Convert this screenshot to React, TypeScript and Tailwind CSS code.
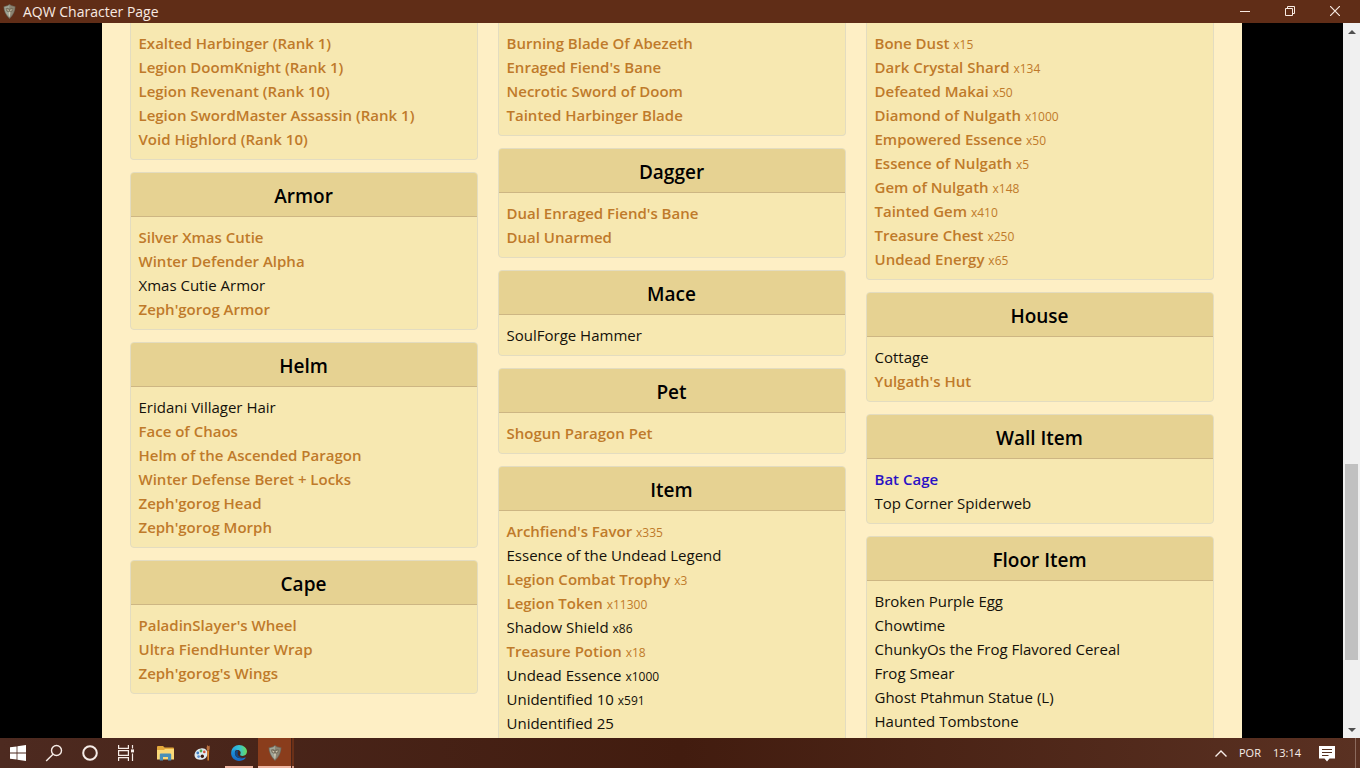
import React from 'react';

type Kind = 'ac' | 'legend' | 'normal';

interface Item {
  name: string;
  kind?: Kind;
  qty?: number;
}

interface Section {
  title?: string;
  items: Item[];
}

const KIND_CLASSES: Record<Kind, string> = {
  ac: 'font-semibold text-[#bf7a2a]',
  legend: 'font-semibold text-[#2a12c4]',
  normal: 'text-[#14110a]',
};

const ac = (name: string, qty?: number): Item => ({ name, qty, kind: 'ac' });
const normal = (name: string, qty?: number): Item => ({ name, qty, kind: 'normal' });

const columns: Section[][] = [
  [
    {
      items: [
        ac('Exalted Harbinger (Rank 1)'),
        ac('Legion DoomKnight (Rank 1)'),
        ac('Legion Revenant (Rank 10)'),
        ac('Legion SwordMaster Assassin (Rank 1)'),
        ac('Void Highlord (Rank 10)'),
      ],
    },
    {
      title: 'Armor',
      items: [
        ac('Silver Xmas Cutie'),
        ac('Winter Defender Alpha'),
        normal('Xmas Cutie Armor'),
        ac("Zeph'gorog Armor"),
      ],
    },
    {
      title: 'Helm',
      items: [
        normal('Eridani Villager Hair'),
        ac('Face of Chaos'),
        ac('Helm of the Ascended Paragon'),
        ac('Winter Defense Beret + Locks'),
        ac("Zeph'gorog Head"),
        ac("Zeph'gorog Morph"),
      ],
    },
    {
      title: 'Cape',
      items: [ac("PaladinSlayer's Wheel"), ac('Ultra FiendHunter Wrap'), ac("Zeph'gorog's Wings")],
    },
  ],
  [
    {
      items: [
        ac('Burning Blade Of Abezeth'),
        ac("Enraged Fiend's Bane"),
        ac('Necrotic Sword of Doom'),
        ac('Tainted Harbinger Blade'),
      ],
    },
    { title: 'Dagger', items: [ac("Dual Enraged Fiend's Bane"), ac('Dual Unarmed')] },
    { title: 'Mace', items: [normal('SoulForge Hammer')] },
    { title: 'Pet', items: [ac('Shogun Paragon Pet')] },
    {
      title: 'Item',
      items: [
        ac("Archfiend's Favor", 335),
        normal('Essence of the Undead Legend'),
        ac('Legion Combat Trophy', 3),
        ac('Legion Token', 11300),
        normal('Shadow Shield', 86),
        ac('Treasure Potion', 18),
        normal('Undead Essence', 1000),
        normal('Unidentified 10', 591),
        normal('Unidentified 25'),
      ],
    },
  ],
  [
    {
      items: [
        ac('Bone Dust', 15),
        ac('Dark Crystal Shard', 134),
        ac('Defeated Makai', 50),
        ac('Diamond of Nulgath', 1000),
        ac('Empowered Essence', 50),
        ac('Essence of Nulgath', 5),
        ac('Gem of Nulgath', 148),
        ac('Tainted Gem', 410),
        ac('Treasure Chest', 250),
        ac('Undead Energy', 65),
      ],
    },
    { title: 'House', items: [normal('Cottage'), ac("Yulgath's Hut")] },
    {
      title: 'Wall Item',
      items: [{ name: 'Bat Cage', kind: 'legend' }, normal('Top Corner Spiderweb')],
    },
    {
      title: 'Floor Item',
      items: [
        normal('Broken Purple Egg'),
        normal('Chowtime'),
        normal('ChunkyOs the Frog Flavored Cereal'),
        normal('Frog Smear'),
        normal('Ghost Ptahmun Statue (L)'),
        normal('Haunted Tombstone'),
      ],
    },
  ],
];

const ShieldIcon = ({ className }: { className?: string }) => (
  <svg viewBox="0 0 14 16" className={className} aria-hidden="true">
    <path d="M7 0 9 1.4 13.4 2.6Q13.4 10 7 16 .6 10 .6 2.6L5 1.4Z" fill="#6f675a" />
    <path d="M7 .8 8.8 2.2 12.6 3.2Q12.4 9.6 7 15Z" fill="#8d8573" />
    <path d="M7 .8 5.2 2.2 1.4 3.2Q1.6 9.6 7 15Z" fill="#9fa597" />
    <path d="M2.6 4.8 5 4 7 5 9 4 11.4 4.8 10.2 7.600 7 9.600 3.800 7.600Z" fill="#77705f" />
    <path d="M3.600 5.600 6.400 6.200 5.800 7.800ZM10.400 5.600 7.600 6.200 8.200 7.800Z" fill="#d0c8ae" />
    <path d="M6 8.400H8L7.400 13.600H6.600Z" fill="#cfc8b2" />
  </svg>
);

const WindowsIcon = () => (
  <svg viewBox="0 0 16 16" className="size-4" fill="#fff" aria-hidden="true">
    <path d="M0 2.3 6.6 1.4V7.6H0ZM7.4 1.3 16 0V7.6H7.4ZM0 8.4H6.6V14.6L0 13.7ZM7.4 8.4H16V16L7.4 14.7Z" />
  </svg>
);

const SearchIcon = () => (
  <svg viewBox="0 0 18 18" className="size-[18px]" fill="none" stroke="#f6ece7" strokeWidth="1.4" aria-hidden="true">
    <circle cx="11.5" cy="6.5" r="5" />
    <path d="M8 10.2 1.2 17" />
  </svg>
);

const CortanaIcon = () => (
  <svg viewBox="0 0 16 16" className="size-4" fill="none" stroke="#f6ece7" strokeWidth="2" aria-hidden="true">
    <circle cx="8" cy="8" r="6.8" />
  </svg>
);

const TaskViewIcon = () => (
  <svg viewBox="0 0 18 16" className="h-4 w-[18px]" fill="none" stroke="#f6ece7" strokeWidth="1.2" aria-hidden="true">
    <path d="M1.6 0V3.4H11.4V0M1.6 16V12.6H11.4V16M1.6 5.6H11.4V10.4H1.6ZM15.5 0V3.4M15.5 8.4V16" />
    <path d="M14 4.4H17V7.4H14Z" fill="#f6ece7" stroke="none" />
  </svg>
);

const ExplorerIcon = () => (
  <svg viewBox="0 0 17 15" className="h-[15px] w-[17px]" aria-hidden="true">
    <path d="M0 1Q0 0 1 0H6L7.6 1.6H16Q17 1.6 17 2.6V13H0Z" fill="#e3a93c" />
    <path d="M0 4H7L8 3H17V13.6H0Z" fill="#fbd978" />
    <path d="M2.8 14.4V8.6Q2.8 7.6 3.8 7.6H13.2Q14.2 7.6 14.2 8.6V14.4H11V11H6V14.4Z" fill="#4a90b8" />
  </svg>
);

const PaintIcon = () => (
  <svg viewBox="0 0 17 16" className="h-4 w-[17px]" aria-hidden="true">
    <path d="M7 3.4C12 2.8 14 6.4 13.4 9.6 12.8 13.4 9.6 15 6 14.8 2 14.6 0 12 .6 9 1.2 6 3.6 3.8 7 3.4Z" fill="#dfeaf0" />
    <circle cx="3.8" cy="8" r="1.4" fill="#3f7fc4" />
    <circle cx="7" cy="6" r="1.4" fill="#50a850" />
    <circle cx="10.3" cy="6.9" r="1.3" fill="#d4513b" />
    <circle cx="4.6" cy="11.6" r="1.4" fill="#5b8fd0" />
    <circle cx="8.3" cy="11.2" r="1.7" fill="#3c1a0e" />
    <path d="M13.2 5.6H15.2L14.9 15.4H13.5Z" fill="#d9822b" />
    <path d="M13 5.6 12.6 2.4 13.4 0 14.4 1.2 15.6 .4 15.8 3 15.3 5.6Z" fill="#b9713f" />
  </svg>
);

const EdgeIcon = () => (
  <svg viewBox="0 0 16 16" className="size-4" aria-hidden="true">
    <defs>
      <linearGradient id="edgeTop" x1="0" y1="0" x2="1" y2="0">
        <stop offset="0" stopColor="#2aa3e0" />
        <stop offset=".5" stopColor="#35c1d5" />
        <stop offset="1" stopColor="#6bdc5a" />
      </linearGradient>
      <linearGradient id="edgeBottom" x1="0" y1="0" x2="0" y2="1">
        <stop offset="0" stopColor="#1d9be0" />
        <stop offset="1" stopColor="#1668c4" />
      </linearGradient>
    </defs>
    <path d="M.2 7.2C.7 3 4 0 8 0c4.6 0 8 3 8 6.6 0 2.6-2 4.3-4.3 4.3-2 0-3-.8-2.4-1.7.9-1.4.3-4.2-2.9-4.2C3.600 5 1 6 .2 7.200Z" fill="url(#edgeTop)" />
    <path d="M.2 7.200C1.200 5 3.700 4 6 4.300 4 5.300 3.600 7.400 4 9.200c.7 3.200 4.500 5.300 9.500 3.500.9-.3 1.400-.1.900.6C12.800 15.200 10.500 16 8 16 3.200 16-.5 11.700.2 7.200Z" fill="url(#edgeBottom)" />
    <path d="M5.800 5.200C4 6 3.700 8.200 4.300 10c1 2.600 4.700 4.300 9.400 2.600-3.200.7-7-1-7-4.300Q6.700 6.600 7.600 6Q7 5.200 5.800 5.200Z" fill="#114a8b" />
  </svg>
);

const NotificationIcon = () => (
  <svg viewBox="0 0 16 16" className="size-4" aria-hidden="true">
    <path d="M0 0H16V12.5H10.5L8 15.5 5.5 12.5H0Z" fill="#fff" />
    <path d="M3 3.5H13M3 6.5H13M3 9.5H9.5" stroke="#55301f" strokeWidth="1.1" />
  </svg>
);

const ItemCard = ({ title, items }: Section) => (
  <section
    className={
      title
        ? 'overflow-hidden rounded-[4px] border border-[#e3dcc0] bg-[#f7e8b1]'
        : 'overflow-hidden rounded-b-[4px] border border-t-0 border-[#e3dcc0] bg-[#f7e8b1]'
    }
  >
    {title && (
      <h2 className="flex h-11 items-center justify-center border-b border-[#cdb683] bg-[#e6d292] pt-0.5 text-[19px] font-semibold leading-6 text-black">
        {title}
      </h2>
    )}
    <ul className="p-2">
      {items.map(item => (
        <li key={item.name} className="leading-6">
          <span className={KIND_CLASSES[item.kind || 'normal']}>
            {item.name}{' '}
            {item.qty && <small className="text-xs font-normal">x{item.qty}</small>}
          </span>
        </li>
      ))}
    </ul>
  </section>
);

const TitleBar = () => (
  <header className="flex h-[23px] shrink-0 items-center bg-[#602d17] text-[#f8eae2]">
    <ShieldIcon className="ml-[3px] h-[15px] w-[13px]" />
    <h1 className="ml-[7px] flex-1 text-sm">AQW Character Page</h1>
    <button aria-label="Minimize" className="flex h-full w-[45px] items-center justify-center pb-0.5">
      <svg viewBox="0 0 10 10" className="size-[10px]" stroke="currentColor"><path d="M0 5.5H10" /></svg>
    </button>
    <button aria-label="Restore" className="flex h-full w-[45px] items-center justify-center pb-0.5">
      <svg viewBox="0 0 10 10" className="size-[10px]" fill="none" stroke="currentColor">
        <path d="M.5 2.5H7.5V9.5H.5ZM2.5 2.5V.5H9.5V7.5H7.5" />
      </svg>
    </button>
    <button aria-label="Close" className="mr-[3px] flex h-full w-[45px] items-center justify-center pb-0.5">
      <svg viewBox="0 0 10 10" className="size-[10px]" stroke="currentColor" strokeWidth="1.2"><path d="M0 0 10 10M10 0 0 10" /></svg>
    </button>
  </header>
);

const ScrollBar = () => (
  <div className="flex w-[17px] shrink-0 flex-col items-center bg-[#f0f0f0]">
    <button aria-label="Scroll up" className="flex h-[17px] w-full items-center justify-center">
      <svg viewBox="0 0 8 4" className="h-1 w-2" fill="#505050"><path d="M0 4 4 0 8 4Z" /></svg>
    </button>
    <div className="flex w-full flex-1 flex-col items-center">
      <div className="grow-[424]" />
      <div className="w-[13px] grow-[196] bg-[#c1c1c1]" />
      <div className="grow-[61]" />
    </div>
    <button aria-label="Scroll down" className="flex h-[17px] w-full items-center justify-center">
      <svg viewBox="0 0 8 4" className="h-1 w-2" fill="#505050"><path d="M0 0H8L4 4Z" /></svg>
    </button>
  </div>
);

const TaskBar = () => (
  <footer className="flex h-[30px] shrink-0 bg-linear-to-r from-[#4d2a20] via-[#421c0f] to-[#5a3122] text-[#f8eee9]">
    <button aria-label="Start" className="flex w-9 items-center justify-center"><WindowsIcon /></button>
    <button aria-label="Search" className="flex w-9 items-center justify-center"><SearchIcon /></button>
    <button aria-label="Cortana" className="flex w-9 items-center justify-center"><CortanaIcon /></button>
    <button aria-label="Task View" className="flex w-9 items-center justify-center"><TaskViewIcon /></button>
    <button aria-label="File Explorer" className="ml-[3px] flex w-[37px] items-center justify-center"><ExplorerIcon /></button>
    <button aria-label="Paint" className="flex w-[37px] items-center justify-center"><PaintIcon /></button>
    <button aria-label="Microsoft Edge" className="mx-1 flex w-7 items-center justify-center border-b-2 border-[#f0b8a4] pt-0.5"><EdgeIcon /></button>
    <button aria-label="AQW Character Page" className="ml-px flex w-[33px] items-center justify-center border-b-2 border-[#f0b8a4] bg-[#8a3d1c] pt-0.5">
      <ShieldIcon className="h-4 w-[14px]" />
    </button>
    <div className="ml-px w-0.5 border-b-2 border-[#d69c88] bg-[#6a3018]" />
    <div className="ml-auto flex items-center">
      <button aria-label="Show hidden icons" className="flex w-6 justify-center">
        <svg viewBox="0 0 12 7" className="h-[7px] w-3" fill="none" stroke="currentColor" strokeWidth="1.4"><path d="M.5 6.5 6 1 11.5 6.5" /></svg>
      </button>
      <button className="ml-1.5 text-[11px]">POR</button>
      <button className="ml-3 text-[11px]">13:14</button>
      <button aria-label="Notifications" className="ml-[18px] mr-5 pt-px"><NotificationIcon /></button>
      <div className="mr-1 h-[30px] w-px bg-[#8b6a5d]" />
    </div>
  </footer>
);

export default function App() {
  return (
    <div className="flex h-screen flex-col overflow-hidden bg-black font-['Open_Sans','Noto_Sans',sans-serif] text-[15px]">
      <TitleBar />
      <div className="flex min-h-0 flex-1">
        <main className="min-w-0 flex-1 overflow-hidden">
          <div className="mx-auto grid min-h-full max-w-[1140px] grid-cols-3 gap-5 bg-[#feefc5] px-7">
            {columns.map((sections, index) => (
              <div key={index} className="flex flex-col gap-3">
                {sections.map(section => (
                  <ItemCard key={section.title || 'continued'} {...section} />
                ))}
              </div>
            ))}
          </div>
        </main>
        <ScrollBar />
      </div>
      <TaskBar />
    </div>
  );
}
